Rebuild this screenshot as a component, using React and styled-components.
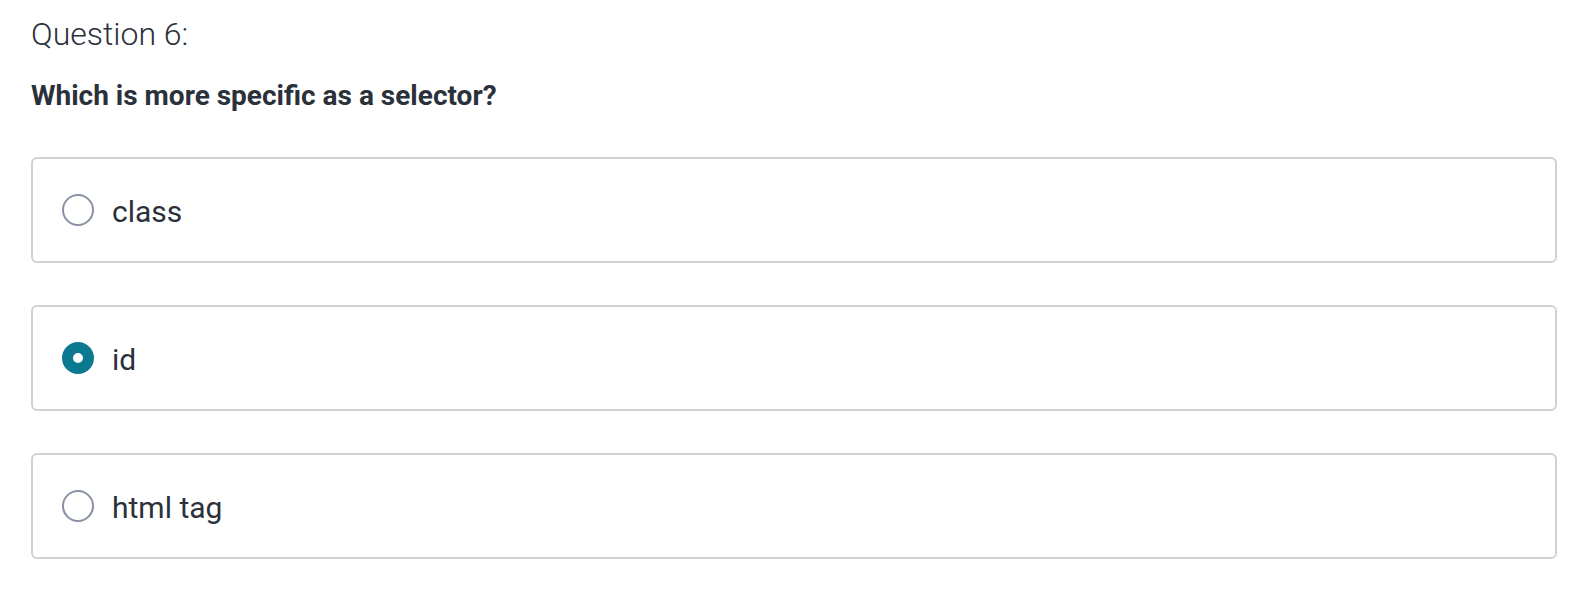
import React, { useState } from "react";
import styled, { createGlobalStyle } from "styled-components";

const GlobalStyle = createGlobalStyle`
  body {
    margin: 0;
    background: #ffffff;
    font-family: Roboto, "Liberation Sans", Arial, sans-serif;
    color: #2b313b;
  }
`;

const options = ["class", "id", "html tag"];

function App() {
  const [selected, setSelected] = useState(1);

  return (
    <>
      <GlobalStyle />
      <Page>
        <Label>Question 6:</Label>
        <Title>Which is more specific as a selector?</Title>
        <Options>
          {options.map((text, i) => (
            <Option key={text} onClick={() => setSelected(i)}>
              <Radio checked={selected === i} />
              <OptionText>{text}</OptionText>
            </Option>
          ))}
        </Options>
      </Page>
    </>
  );
}

const Page = styled.div`
padding: 16px 31px 34px 31px;
`;

const Label = styled.div`
font-size: 32px;
font-weight: 300;
line-height: 36px;
`;

const Title = styled.h2`
margin: 28px 0 0 0;
font-size: 28px;
font-weight: 700;
line-height: 32px;
`;

const Options = styled.div`
margin-top: 45px;
display: flex;
flex-direction: column;
gap: 42px;
`;

const Option = styled.label`
display: flex;
align-items: center;
gap: 18px;
height: 106px;
box-sizing: border-box;
padding: 0 29px;
border: 2px solid #d2d2d2;
border-radius: 6px;
cursor: pointer;
`;

const Radio = styled.span`
width: 32px;
height: 32px;
box-sizing: border-box;
border-radius: 50%;
flex-shrink: 0;
background: #ffffff;
border: ${(p) => (p.checked ? "11px solid #0b7a90" : "2px solid #8892a3")};
`;

const OptionText = styled.span`
font-size: 30px;
line-height: 34px;
padding-top: 3px;
`;

export default App;
